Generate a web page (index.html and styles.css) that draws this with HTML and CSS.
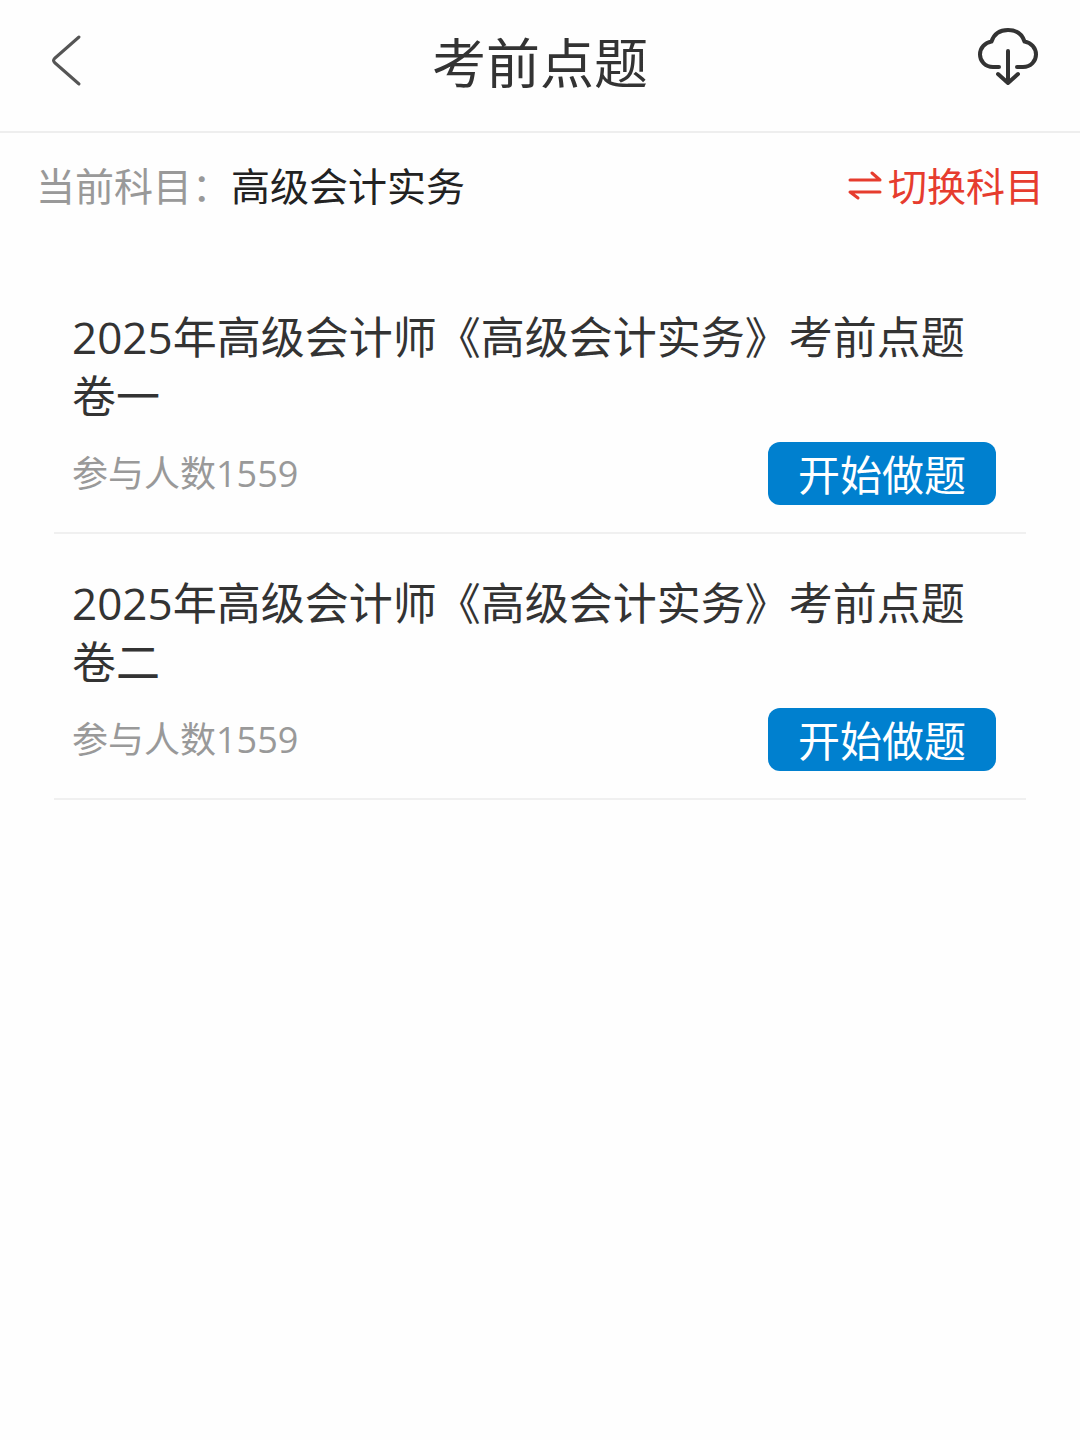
FILE: index.html
```
<!DOCTYPE html>
<html lang="zh-CN">
<head>
    <meta charset="UTF-8">
    <meta name="viewport" content="width=device-width, initial-scale=1.0">
    <title>考前点题</title>
    <link rel="stylesheet" href="styles.css">
</head>
<body>
    <header class="header">
        <button class="icon-btn" type="button" aria-label="返回">
            <svg width="60" height="60" viewBox="0 0 60 60" fill="none" stroke="#555" stroke-width="3" stroke-linecap="round" stroke-linejoin="round">
                <path d="M37 10 L12.500 31.500 Q10.500 33.500 12.500 35.500 L37 57"/>
            </svg>
        </button>
        <h1>考前点题</h1>
        <button class="icon-btn" type="button" aria-label="下载">
            <svg width="60" height="60" viewBox="0 0 60 60" fill="none" stroke="#333" stroke-width="4" stroke-linecap="round" stroke-linejoin="round">
                <path d="M21 40 H15 C7 40 2 34 2 27.500 C2 21 7 15.500 13.500 14.500 C16 7 22 3 30 3 C38 3 44 7 46.500 14.500 C53 15.500 58 21 58 27.500 C58 34 53 40 45 40 H39"/>
                <path d="M30 24 V56 M20 47 L30 56 L40 47"/>
            </svg>
        </button>
    </header>

    <div class="subject">
        <p><span class="label">当前科目：</span>高级会计实务</p>
        <a href="#" class="switch">
            <svg width="34" height="30" viewBox="0 0 34 30" fill="none" stroke="#e63c2e" stroke-width="3" stroke-linecap="round" stroke-linejoin="round">
                <path d="M2 9 H32 L24 2"/>
                <path d="M32 21 H2 L10 27"/>
            </svg>
            切换科目
        </a>
    </div>

    <main class="list">
        <div class="item">
            <h2>2025年高级会计师《高级会计实务》考前点题卷一</h2>
            <div class="item-row">
                <span class="count">参与人数1559</span>
                <button class="start" type="button">开始做题</button>
            </div>
        </div>
        <div class="item">
            <h2>2025年高级会计师《高级会计实务》考前点题卷二</h2>
            <div class="item-row">
                <span class="count">参与人数1559</span>
                <button class="start" type="button">开始做题</button>
            </div>
        </div>
    </main>
</body>
</html>
```

FILE: styles.css
```
body { margin: 0; background: #fefefe; color: #333; font-family: "Open Sans", "Noto Sans CJK SC", sans-serif; }
h1, h2, p { margin: 0; font-weight: 400; }
button { font-family: inherit; border: none; cursor: pointer; }

.header { display: flex; justify-content: space-between; align-items: flex-start; padding: 23px 42px 28px; border-bottom: 2px solid #eee; }
.header h1 { font-size: 54px; line-height: 80px; }
.icon-btn { padding: 0; margin-top: 4px; background: none; height: 60px; }
.icon-btn svg { display: block; }

.subject { display: flex; justify-content: space-between; align-items: center; padding: 23px 36px 25px; font-size: 39px; line-height: 60px; }
.subject p { color: #222; }
.subject .label { color: #999; }
.switch { display: flex; align-items: center; gap: 6px; color: #e63c2e; text-decoration: none; }

.list { margin: 27px 54px 0; }
.item { padding: 40px 30px 27px 18px; border-bottom: 2px solid #f0f0f0; }
.item h2 { font-size: 44px; line-height: 59px; }
.item-row { display: flex; justify-content: space-between; align-items: center; margin-top: 16px; }
.count { font-size: 36px; line-height: 63px; color: #999; }
.start { padding: 3px 30px 0; font-size: 42px; line-height: 60px; color: #fff; background: #0080cf; border-radius: 12px; }
```
